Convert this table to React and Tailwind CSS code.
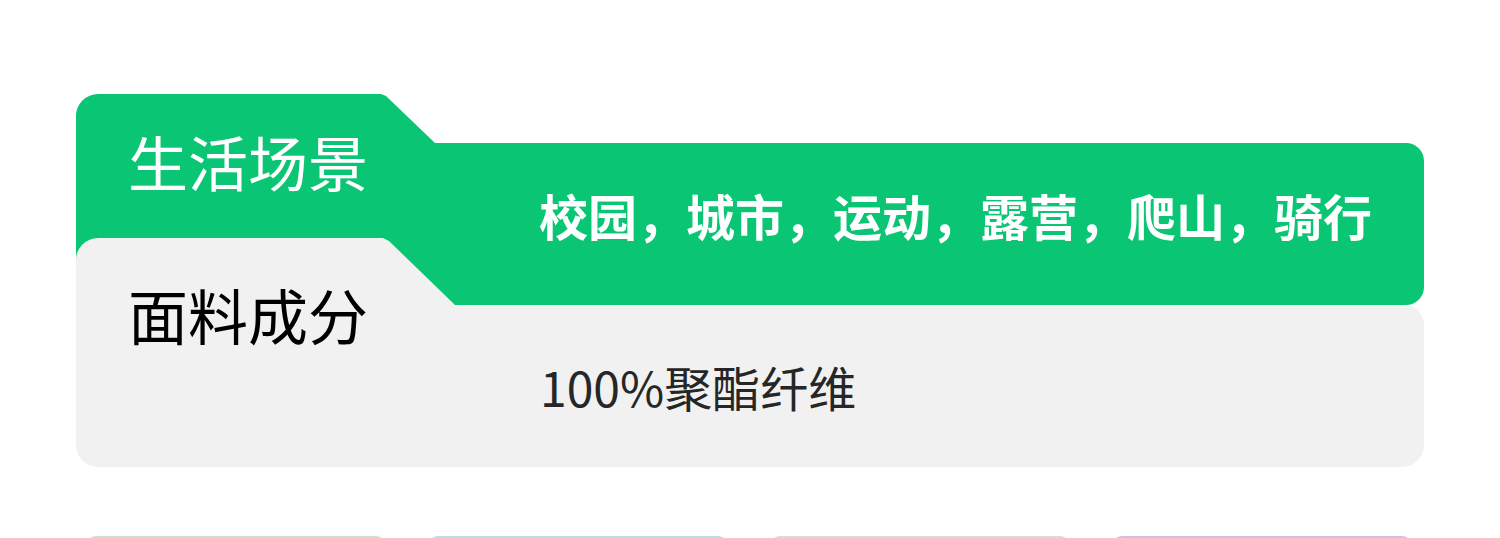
import React from 'react';

const rows = [
  {
    label: '生活场景',
    value: '校园，城市，运动，露营，爬山，骑行',
    tone: 'green',
  },
  {
    label: '面料成分',
    value: '100%聚酯纤维',
    tone: 'grey',
  },
];

const cards = ['bg-[#cfe0c6]', 'bg-[#bcdcec]', 'bg-[#dadada]', 'bg-[#cdbfe6]'];

const App = () => {
  const [scene, fabric] = rows;

  return (
    <div className="min-h-screen bg-white font-['Noto_Sans_CJK_SC','Noto_Sans',sans-serif]">
      <div className="px-[76px] pt-[94px]">
        {/* scene row */}
        <section className="relative">
          <div className="h-[49px] w-[359px] rounded-tl-[22px] bg-[#0ac574] [clip-path:polygon(0_0,305px_0,310px_2px,359px_49px,0_49px)]" />
          <div className="h-[162px] rounded-r-[18px] bg-[#0ac574] pl-[463px] pt-[47px]">
            <p className="text-[49px] leading-none font-bold text-white">{scene.value}</p>
          </div>
          <span className="absolute left-[52px] top-[37px] text-[60px] leading-none text-white">
            {scene.label}
          </span>
        </section>

        {/* fabric row */}
        <section className="relative -mt-[67px]">
          <div className="h-[67px] w-[379px] rounded-tl-[22px] bg-[#f1f1f1] [clip-path:polygon(0_0,307px_0,313px_3px,379px_67px,0_67px)]" />
          <div className="h-[162px] rounded-tr-[20px] rounded-b-[22px] bg-[#f1f1f1] pl-[464px] pt-[57px]">
            <p className="text-[48px] leading-none text-[#262626]">{fabric.value}</p>
          </div>
          <span className="absolute left-[52px] top-[46px] text-[60px] leading-none text-black">
            {fabric.label}
          </span>
        </section>

        {/* product cards */}
        <div className="mt-[69px] ml-[10px] flex gap-[42px]">
          {cards.map((c, i) => (
            <div key={i} className={`h-[220px] w-[300px] rounded-t-[10px] ${c}`} />
          ))}
        </div>
      </div>
    </div>
  );
};

export default App;
